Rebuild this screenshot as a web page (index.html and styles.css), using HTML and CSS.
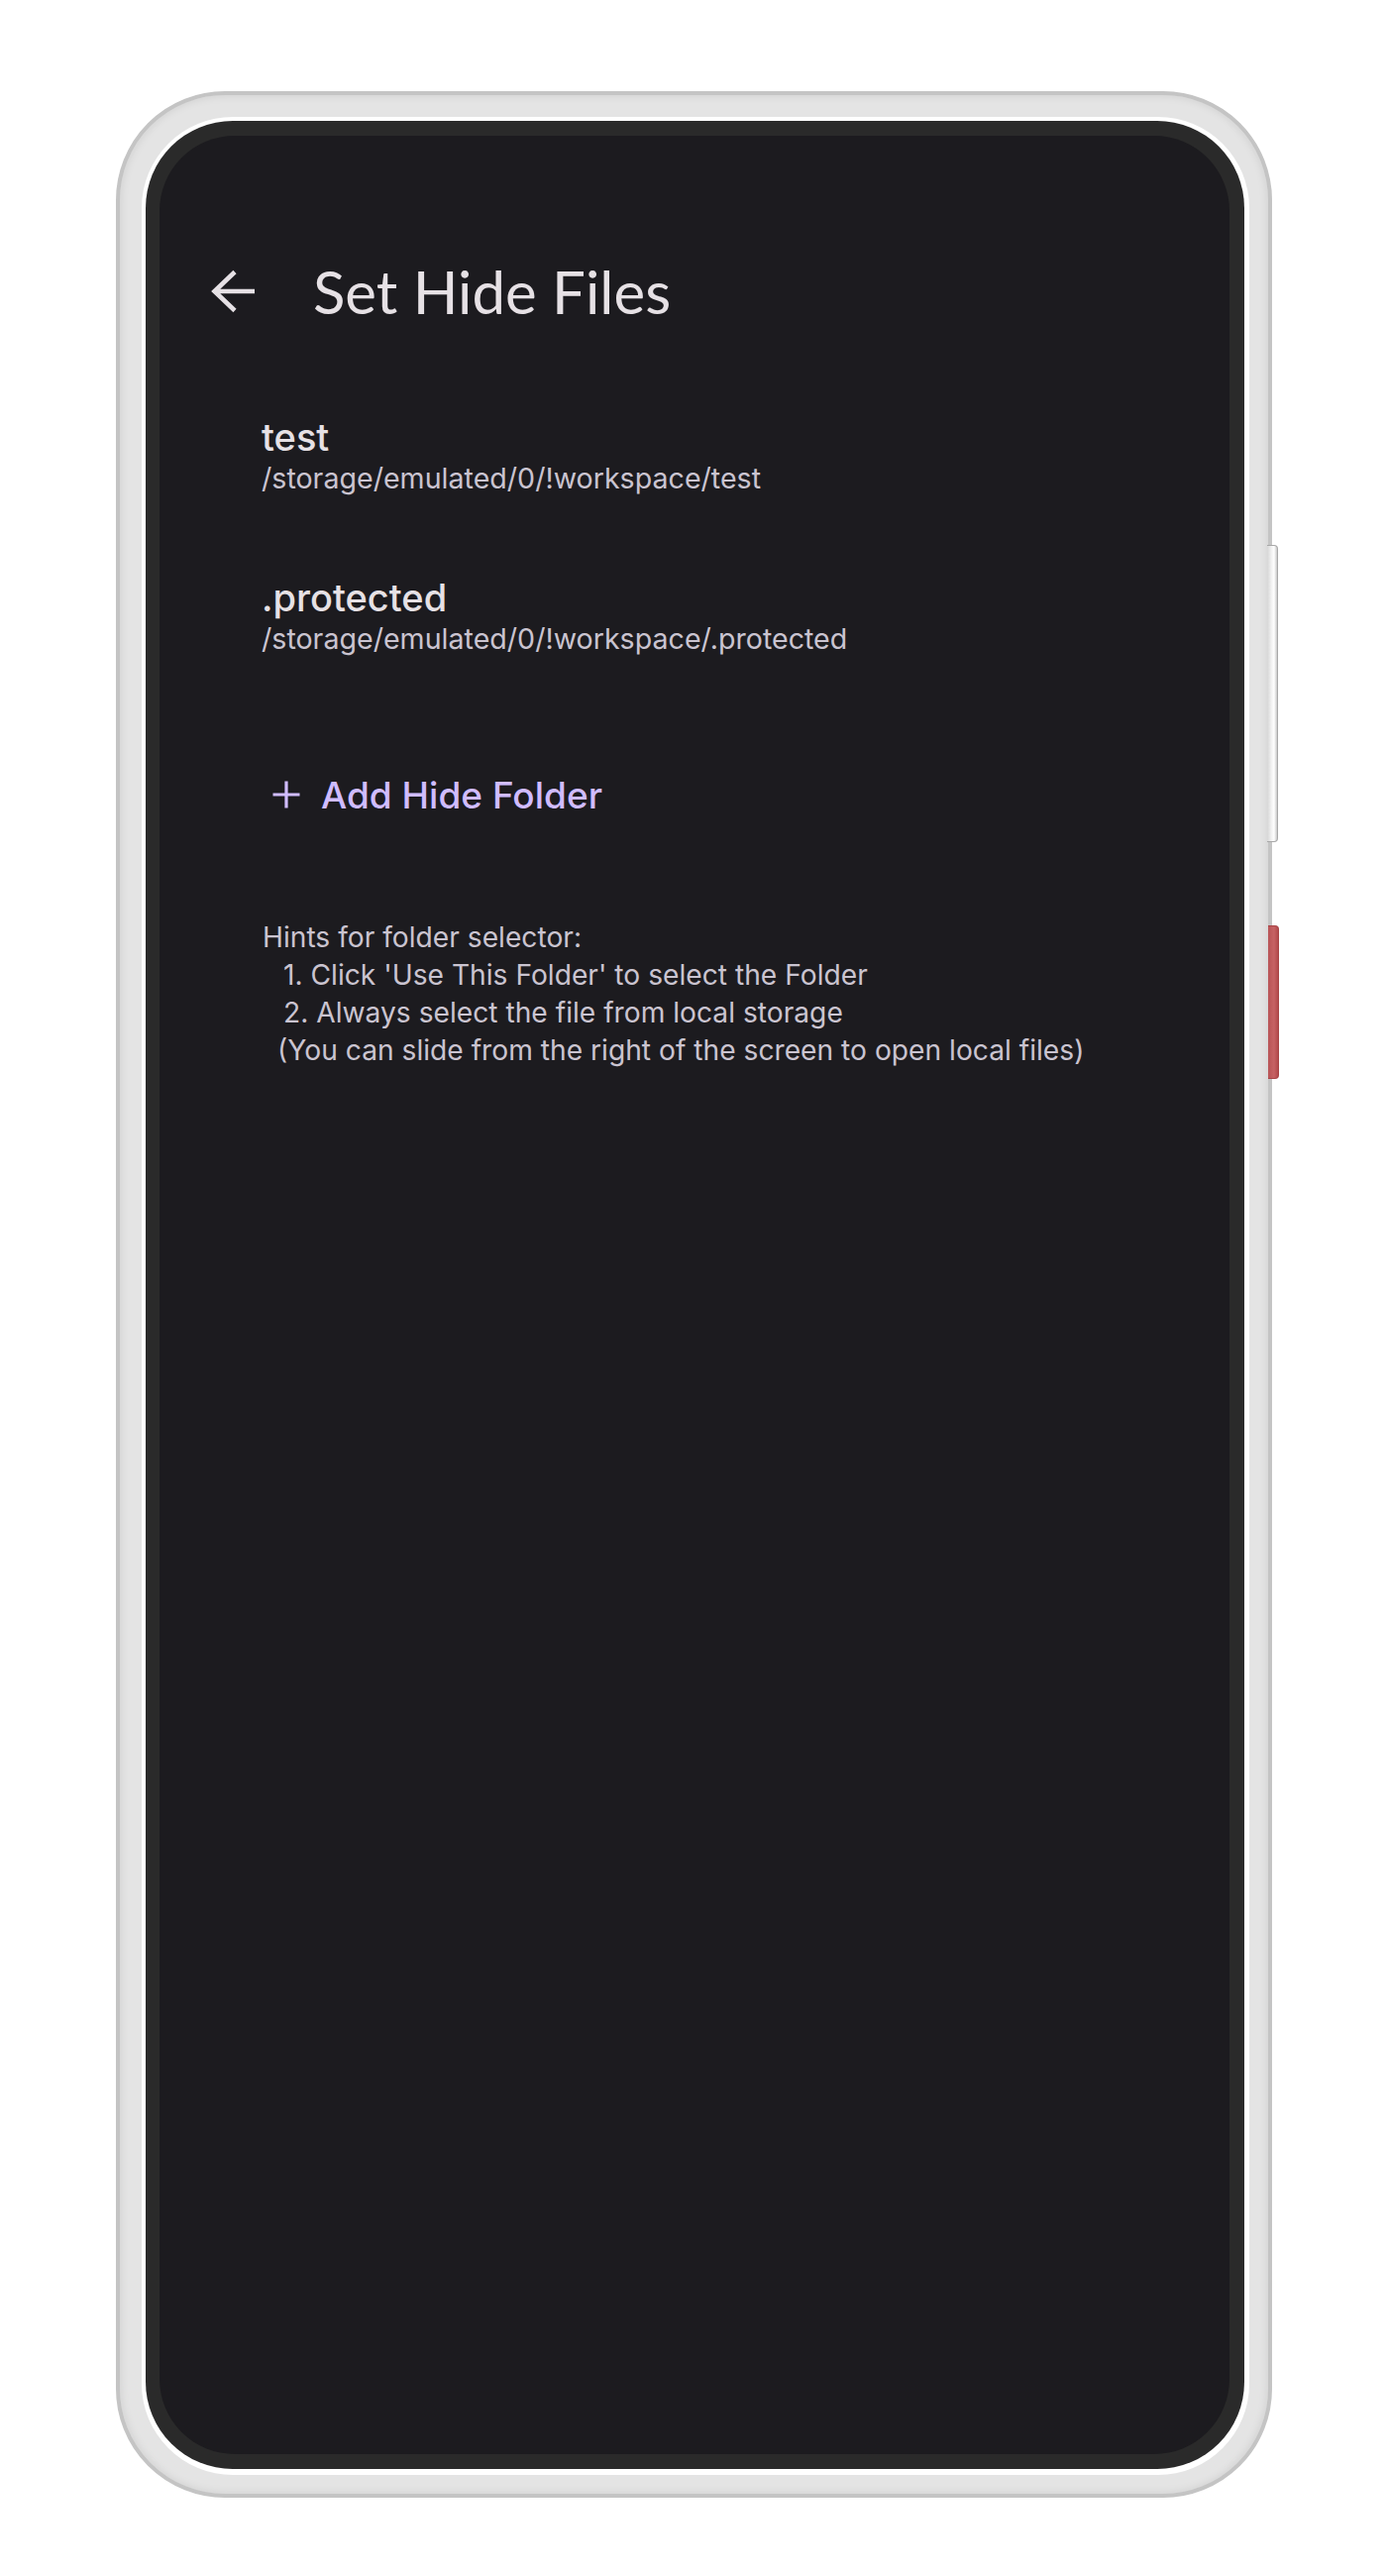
FILE: index.html
```html
<!DOCTYPE html>
<html lang="en">
<head>
<meta charset="utf-8">
<title>Set Hide Files</title>
<link rel="stylesheet" href="styles.css">
</head>
<body>
<div class="phone">
  <div class="side-btn side-btn-power"></div>
  <div class="side-btn side-btn-red"></div>
  <div class="ring">
    <div class="bezel">
      <div class="screen">
        <header class="appbar">
          <svg class="back" viewBox="0 0 46 46" aria-hidden="true"><path d="M45 23H4M25 3.5L4.5 23 25 42.5"/></svg>
          <h1 class="title">Set Hide Files</h1>
        </header>
        <ul class="folders">
          <li class="folder">
            <div class="folder-name">test</div>
            <div class="folder-path">/storage/emulated/0/!workspace/test</div>
          </li>
          <li class="folder">
            <div class="folder-name">.protected</div>
            <div class="folder-path">/storage/emulated/0/!workspace/.protected</div>
          </li>
        </ul>
        <div class="add-row">
          <button class="add-btn" type="button">
            <svg class="plus" viewBox="0 0 28 28" aria-hidden="true"><path d="M14 0.5v27M0.5 14h27"/></svg>
            <span>Add Hide Folder</span>
          </button>
        </div>
        <div class="hints">
          <div class="hint">Hints for folder selector:</div>
          <div class="hint hint-step">1. Click 'Use This Folder' to select the Folder</div>
          <div class="hint hint-step">2. Always select the file from local storage</div>
          <div class="hint hint-note">(You can slide from the right of the screen to open local files)</div>
        </div>
      </div>
    </div>
  </div>
</div>
</body>
</html>
```
FILE: styles.css
```css
* { box-sizing: border-box; }
html, body { margin: 0; padding: 0; background: #ffffff; }
body { font-family: "Inter", "Roboto", sans-serif; }

.phone {
  position: relative;
  margin: 92px 0 0 117px;
  width: 1167px;
  height: 2429px;
  border: 4px solid #c4c4c4;
  border-radius: 110px;
  background: #e4e4e4;
  padding: 22px 19px 19px 22px;
  box-shadow: inset 0 0 10px rgba(0,0,0,0.10);
}

.side-btn {
  position: absolute;
  width: 11px;
  border-radius: 0 4px 4px 0;
}
.side-btn-power {
  left: 1158px;
  top: 454px;
  height: 300px;
  background: linear-gradient(90deg, #d6d6d6 0%, #f2f2f2 45%, #ffffff 70%, #c8c8c8 100%);
  border: 1px solid #a8a8a8;
  border-left: none;
}
.side-btn-red {
  left: 1159px;
  top: 838px;
  height: 155px;
  background: linear-gradient(90deg, #b85456 0%, #c66264 60%, #b24a4c 100%);
  border: 1px solid #a84446;
  border-left: none;
}

.ring {
  height: 100%;
  background: #ffffff;
  border-radius: 92px;
  padding: 4px 5px 6px 4px;
}
.bezel {
  height: 100%;
  background: #2a2a2a;
  border-radius: 88px;
  padding: 15px 15px 15px 14px;
}
.screen {
  height: 100%;
  background: #1c1b1f;
  border-radius: 76px;
  padding-top: 107px;
  color: #e6e1e5;
  overflow: hidden;
}

.appbar {
  display: flex;
  align-items: center;
  height: 100px;
  padding-left: 51px;
}
.back {
  width: 46px;
  height: 46px;
  fill: none;
  stroke: #e6e1e5;
  stroke-width: 4.6;
  stroke-linejoin: miter;
  flex: none;
}
.title {
  margin: 0 0 0 58px;
  font-family: "Lato", "Inter", sans-serif;
  font-size: 60px;
  font-weight: 400;
  line-height: 100px;
  color: #e6e1e5;
}

.folders {
  list-style: none;
  margin: 36px 0 0 0;
  padding: 0 0 0 103px;
}
.folder {
  padding: 39px 0;
}
.folder-name {
  font-size: 38px;
  line-height: 44px;
  font-weight: 500;
  color: #e6e1e5;
}
.folder-path {
  font-size: 28.6px;
  line-height: 40px;
  color: #cac4d0;
}

.add-row {
  margin-top: 58px;
  padding-left: 100px;
}
.add-btn {
  display: flex;
  align-items: center;
  height: 80px;
  padding: 0 0 0 14px;
  border: none;
  background: transparent;
  color: #d0bcff;
  font-family: "Inter", "Roboto", sans-serif;
  font-size: 37px;
  font-weight: 500;
  cursor: pointer;
}
.plus {
  width: 28px;
  height: 28px;
  fill: none;
  stroke: #d0bcff;
  stroke-width: 3.2;
  margin-right: 21px;
}

.hints {
  margin-top: 85px;
  padding-left: 104px;
  font-size: 28.2px;
  line-height: 38px;
  color: #cac4d0;
}
.hint-step { padding-left: 21px; }
.hint-note { padding-left: 15px; }
```
